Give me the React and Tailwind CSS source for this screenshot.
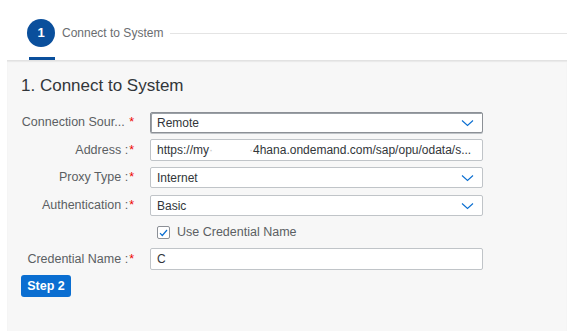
import React from "react";

// --- Chevron for select boxes ---
const Chevron = () => (
  <svg width="13" height="8" viewBox="0 0 13 8" fill="none" className="shrink-0">
    <path d="M1 1.5l5.5 5 5.5-5" stroke="#0a6ed1" strokeWidth="1.1" />
  </svg>
);

// --- Form row ---
const Row = ({ label, children, top }) => (
  <div className={`flex items-center ${top}`}>
    <div className="w-[113px] text-right text-[12.5px] text-[#5b5f63] whitespace-nowrap">
      {label}
      <span className="text-[#e00] ml-[1px]">*</span>
    </div>
    <div className="ml-[16px] w-[333px]">{children}</div>
  </div>
);

const Select = ({ value, focused }) => (
  <div
    className={`h-[21px] flex items-center justify-between pl-[6px] pr-[8px] bg-white rounded-[2px] border ${
      focused
        ? "border-[#8c9096] shadow-[inset_1px_1px_0_#9aa0a6,0_1px_0_#bfc3c7]"
        : "border-[#c0c4c8]"
    }`}
  >
    <span className="text-[12px] text-[#32363a]">{value}</span>
    <Chevron />
  </div>
);

const Input = ({ children }) => (
  <div className="h-[22px] flex items-center pl-[6px] pr-[4px] bg-white rounded-[2px] border border-[#c0c4c8] overflow-hidden whitespace-nowrap">
    <span className="text-[12px] text-[#32363a]">{children}</span>
  </div>
);

export default function App() {
  return (
    <div
      className="w-[567px] h-[331px] bg-white flex flex-col overflow-hidden"
      style={{ fontFamily: '"Liberation Sans", Arial, sans-serif' }}
    >
      {/* Wizard header */}
      <div className="h-[60px] flex flex-col">
        <div className="flex items-center pl-[27px] mt-[19px] h-[28px]">
          <div className="w-[28px] h-[28px] rounded-full bg-[#0a4f9c] flex items-center justify-center text-white text-[13px] font-bold">
            1
          </div>
          <span className="ml-[7px] text-[12px] text-[#6a6d70]">Connect to System</span>
          <div className="flex-1 ml-[7px] h-px bg-[#e4e4e4]" />
        </div>
        <div className="mt-auto h-[3px] w-[26px] ml-[29px] bg-[#0a4f9c]" />
      </div>

      {/* Content panel */}
      <div className="flex-1 ml-[7px] bg-[#f7f7f7] border-t border-[#e2e2e2] shadow-[inset_0_1px_1px_#e8e8e8] pl-[14px]">
        <h1 className="mt-[14px] text-[17px] text-[#32363a] leading-[22px]">1. Connect to System</h1>

        <Row label={<>Connection Sour... </>} top="mt-[15px]">
          <Select value="Remote" focused />
        </Row>
        <Row label="Address :" top="mt-[6px]">
          <Input>
            https://my<span className="text-[#c8c8c8]">·</span>
            <span className="inline-block w-[36px]" />
            <span className="text-[#c8c8c8]">·</span>4hana.ondemand.com/sap/opu/odata/s...
          </Input>
        </Row>
        <Row label="Proxy Type :" top="mt-[6px]">
          <Select value="Internet" />
        </Row>
        <Row label="Authentication :" top="mt-[7px]">
          <Select value="Basic" />
        </Row>

        <div className="flex items-center mt-[8px] ml-[136px] h-[17px]">
          <div className="w-[13px] h-[13px] bg-white border border-[#8c9096] rounded-[2px] flex items-center justify-center">
            <svg width="9" height="8" viewBox="0 0 9 8" fill="none">
              <path d="M1 4.2l2.3 2.3L8 1" stroke="#0a6ed1" strokeWidth="1.2" />
            </svg>
          </div>
          <span className="ml-[7px] text-[12.5px] text-[#5b5f63]">Use Credential Name</span>
        </div>

        <Row label="Credential Name :" top="mt-[7px]">
          <Input>C</Input>
        </Row>

        <button className="mt-[5px] h-[22px] w-[50px] rounded-[3px] bg-[#0a6ed1] text-white text-[12.5px] font-bold">
          Step 2
        </button>
      </div>
    </div>
  );
}
